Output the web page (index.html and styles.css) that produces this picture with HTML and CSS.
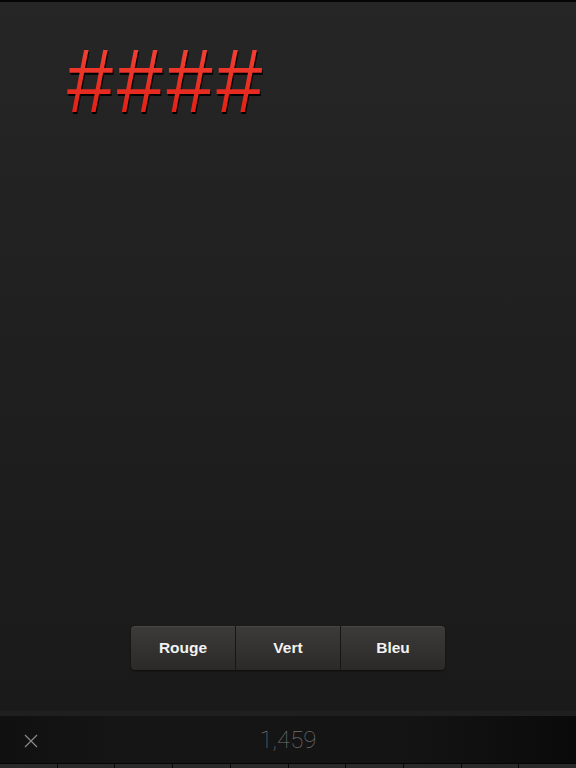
FILE: index.html
```html
<!DOCTYPE html>
<html lang="fr">
<head>
<meta charset="utf-8">
<title>Couleurs</title>
<link rel="stylesheet" href="styles.css">
</head>
<body>
<div class="app">
  <main class="stage">
    <div class="hashes">####</div>
    <div class="segmented">
      <button class="seg">Rouge</button>
      <button class="seg">Vert</button>
      <button class="seg">Bleu</button>
    </div>
  </main>
  <div class="divider"></div>
  <footer class="bar">
    <span class="close">
      <svg width="14" height="14" viewBox="0 0 14 14"><path d="M1 1 L13 13 M13 1 L1 13" stroke="#8a8a8a" stroke-width="1.2" fill="none"/></svg>
    </span>
    <span class="count">1,459</span>
  </footer>
  <div class="ticks">
    <span></span><span></span><span></span><span></span><span></span>
    <span></span><span></span><span></span><span></span><span></span>
  </div>
</div>
</body>
</html>
```

FILE: styles.css
```css
html, body {
  margin: 0;
  padding: 0;
  height: 100%;
  background: #111;
}
.app {
  width: 576px;
  height: 768px;
  display: flex;
  flex-direction: column;
  font-family: "Liberation Sans", Arial, sans-serif;
  overflow: hidden;
}
.stage {
  flex: 1;
  border-top: 2px solid #050505;
  background: linear-gradient(#262626, #1e1e1e 60%, #1a1a1a);
  display: flex;
  flex-direction: column;
  align-items: center;
  justify-content: space-between;
  padding: 34px 0 40px;
}
.hashes {
  align-self: flex-start;
  margin-left: 67px;
  font-size: 90px;
  line-height: 90px;
  color: #ec2a1f;
  display: flex;
}
.hashes {
  transform: scaleX(0.92);
  transform-origin: left center;
  letter-spacing: 4px;
  background: linear-gradient(#f5463a, #e01a10);
  -webkit-background-clip: text;
  background-clip: text;
  -webkit-text-fill-color: transparent;
  filter: drop-shadow(1.5px 2px 0 #000);
}
.segmented {
  display: flex;
  gap: 1px;
  background: #161616;
  border-radius: 4px;
  box-shadow: 0 1px 2px rgba(0,0,0,0.6);
}
.seg {
  width: 104px;
  height: 44px;
  border: none;
  margin: 0;
  background: linear-gradient(#3c3b3a, #2b2a29);
  color: #f2f2f2;
  font-family: "Liberation Sans", Arial, sans-serif;
  font-weight: bold;
  font-size: 15.5px;
  padding: 0;
  box-shadow: inset 0 1px 0 rgba(255,255,255,0.06);
}
.seg:first-child { border-radius: 4px 0 0 4px; }
.seg:last-child { border-radius: 0 4px 4px 0; }
.divider {
  height: 5px;
  background: #1f1f1f;
  border-top: 1px solid #1c1c1c;
}
.bar {
  height: 47px;
  background: linear-gradient(90deg, #101010, #151515 20%, #141414 70%, #0a0a0a);
  display: flex;
  align-items: center;
  position: relative;
}
.close {
  display: flex;
  margin-left: 24px;
  margin-top: 2px;
}
.count {
  position: absolute;
  left: 0;
  right: 0;
  text-align: center;
  font-family: Roboto, "Liberation Sans", sans-serif;
  font-weight: 100;
  font-size: 24px;
  color: #727272;
  pointer-events: none;
}
.ticks {
  height: 4px;
  border-top: 1px solid #050505;
  display: flex;
  gap: 1px;
  background: #080808;
}
.ticks span {
  flex: 1;
  background: #2a2a2a;
}
```
